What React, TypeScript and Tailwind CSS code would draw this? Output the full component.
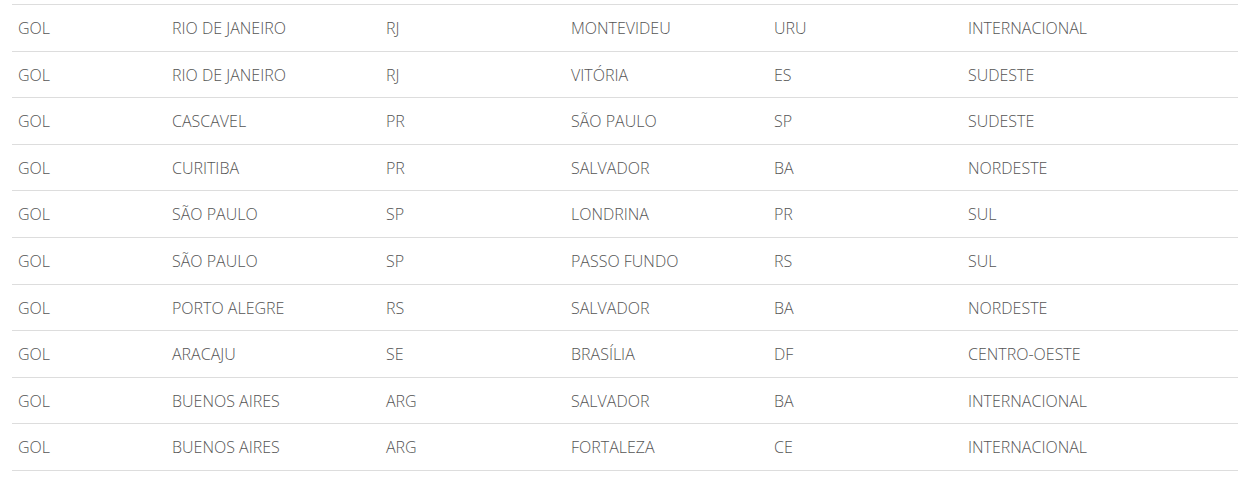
const rows: string[][] = [
  ["GOL", "RIO DE JANEIRO", "RJ", "MONTEVIDEU", "URU", "INTERNACIONAL"],
  ["GOL", "RIO DE JANEIRO", "RJ", "VITÓRIA", "ES", "SUDESTE"],
  ["GOL", "CASCAVEL", "PR", "SÃO PAULO", "SP", "SUDESTE"],
  ["GOL", "CURITIBA", "PR", "SALVADOR", "BA", "NORDESTE"],
  ["GOL", "SÃO PAULO", "SP", "LONDRINA", "PR", "SUL"],
  ["GOL", "SÃO PAULO", "SP", "PASSO FUNDO", "RS", "SUL"],
  ["GOL", "PORTO ALEGRE", "RS", "SALVADOR", "BA", "NORDESTE"],
  ["GOL", "ARACAJU", "SE", "BRASÍLIA", "DF", "CENTRO-OESTE"],
  ["GOL", "BUENOS AIRES", "ARG", "SALVADOR", "BA", "INTERNACIONAL"],
  ["GOL", "BUENOS AIRES", "ARG", "FORTALEZA", "CE", "INTERNACIONAL"],
];

export default function App() {
  return (
    <div className="bg-white pt-[4px] pl-[12px] font-['Open_Sans',sans-serif]">
      <table className="w-[1226px] table-fixed border-collapse text-[16px] font-light text-[#555]">
        <colgroup>
          <col className="w-[154px]" />
          <col className="w-[214px]" />
          <col className="w-[185px]" />
          <col className="w-[203px]" />
          <col className="w-[194px]" />
          <col />
        </colgroup>
        <tbody>
          {rows.map((r, i) => (
            <tr key={i} className="border-t border-b border-[#ddd]">
              {r.map((c, j) => (
                <td key={j} className="h-[46.6px] px-[6px] pt-[2px] pb-0 align-middle leading-[21.6px] whitespace-nowrap">
                  {c}
                </td>
              ))}
            </tr>
          ))}
        </tbody>
      </table>
    </div>
  );
}
